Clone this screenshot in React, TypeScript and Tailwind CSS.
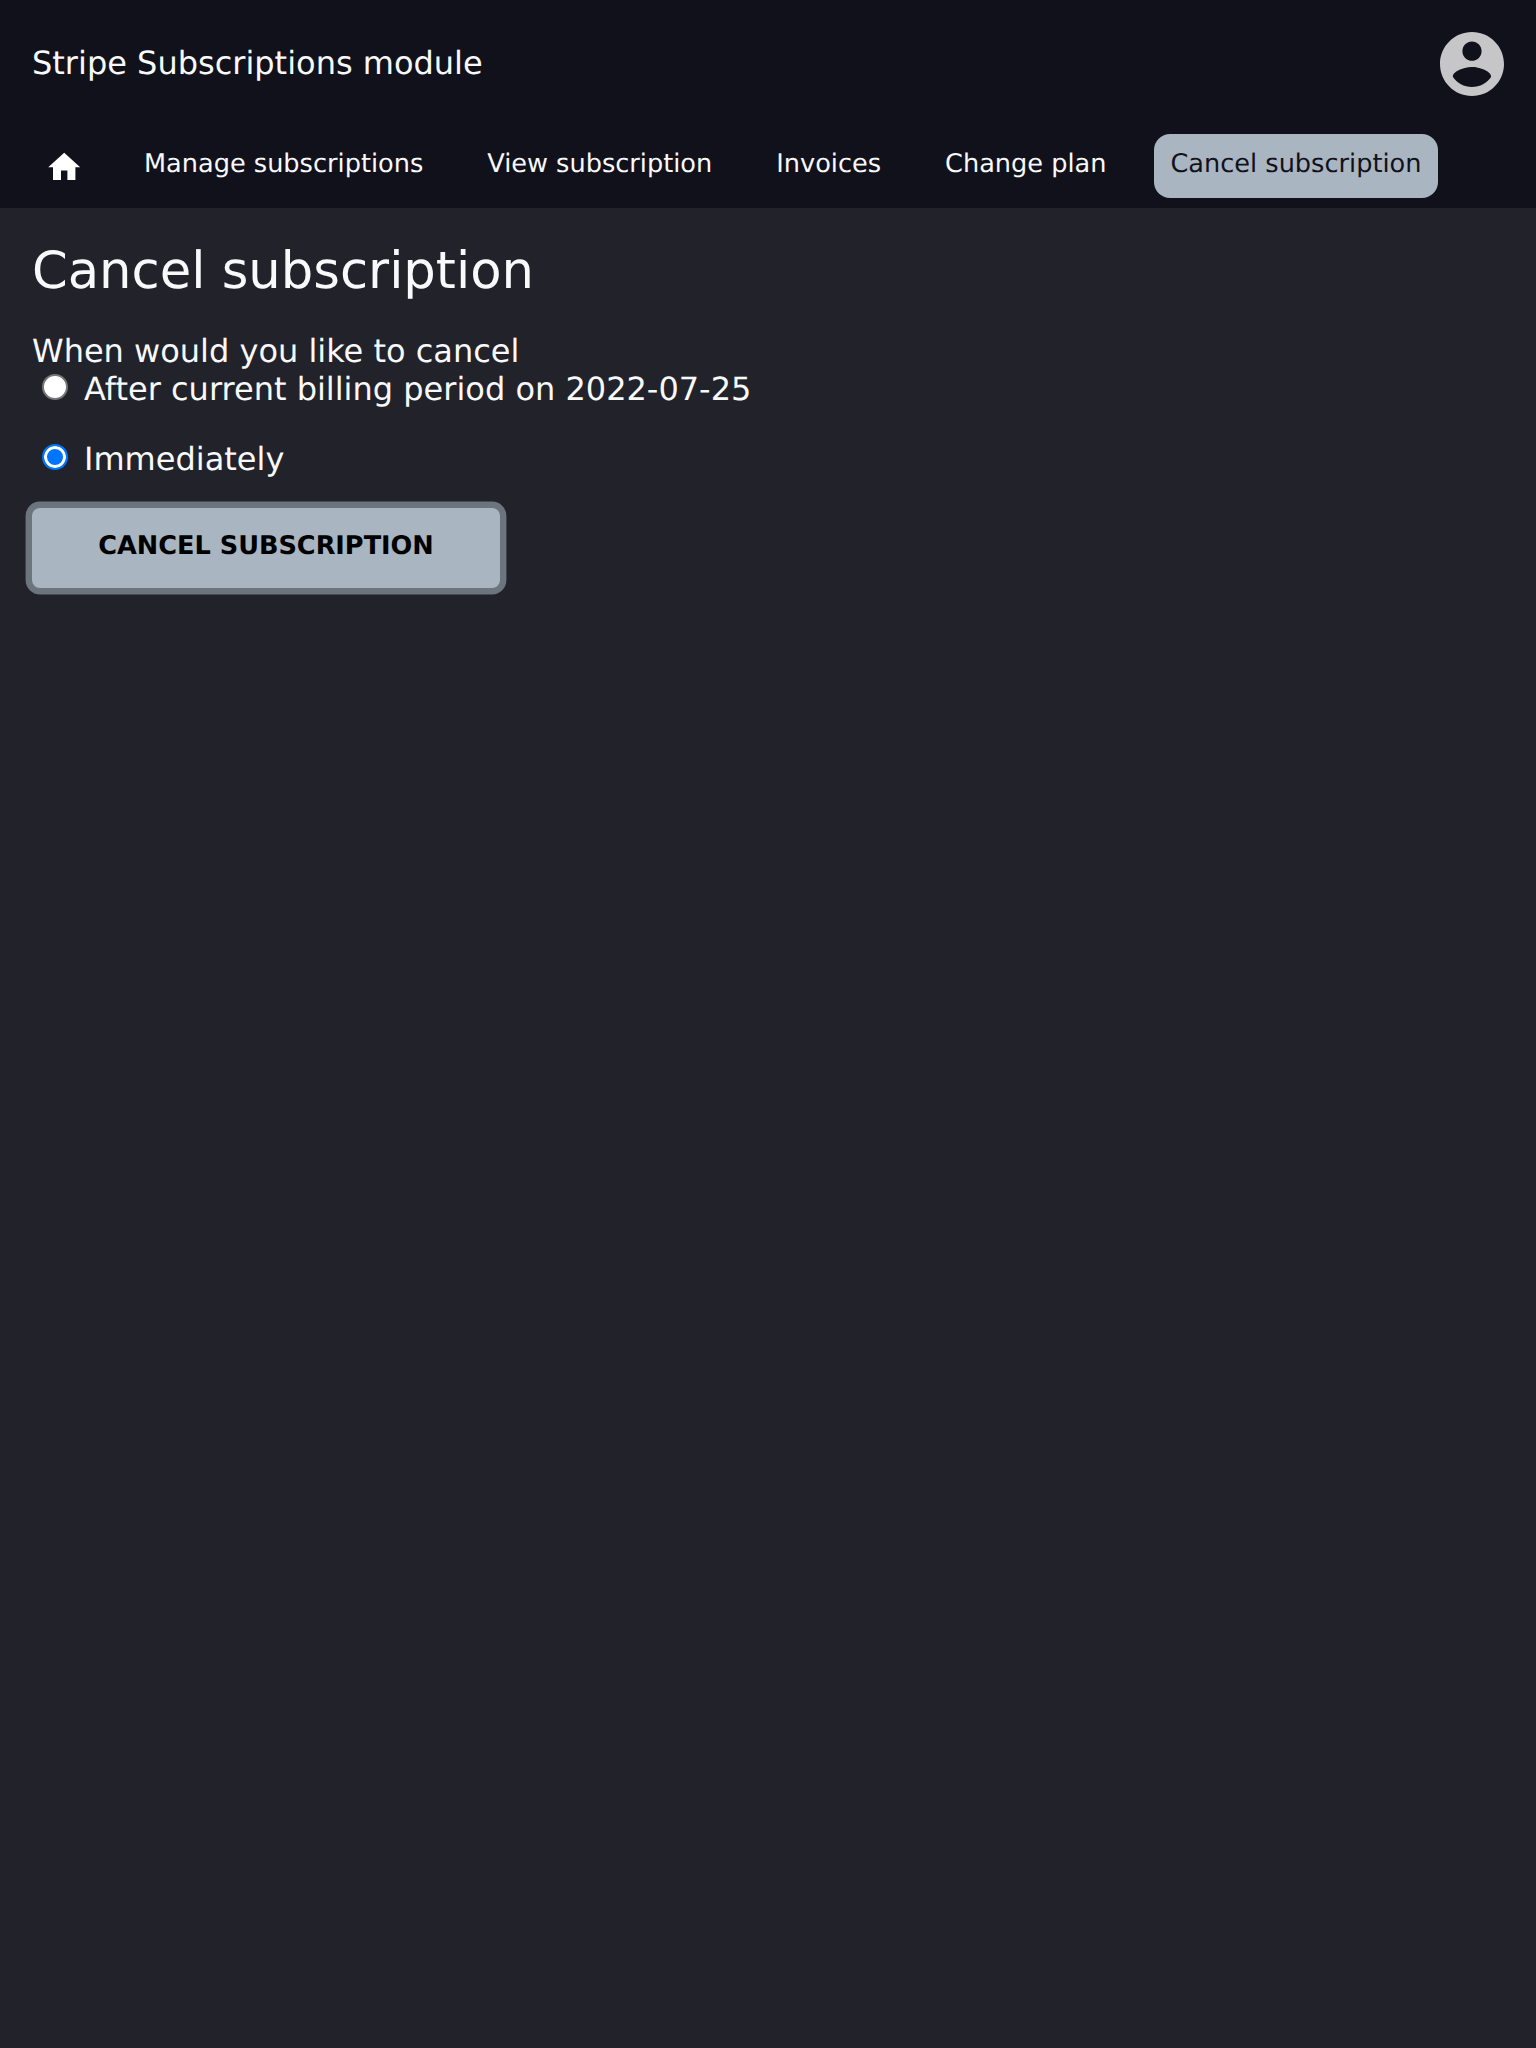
const nav = ['Manage subscriptions', 'View subscription', 'Invoices', 'Change plan', 'Cancel subscription'];

export default function App() {
  return (
    <div className="min-h-[2048px] w-full bg-[#22222b] font-['DejaVu_Sans',sans-serif] text-[#f8f9fa] [text-rendering:geometricPrecision]">
      <header className="h-[208px] bg-[#11111b]">
        <div className="flex h-32 items-center justify-between px-8">
          <div className="pb-0.5 text-[32px] leading-[38px]">Stripe Subscriptions module</div>
          <svg className="size-16" viewBox="2 2 20 20" fill="#c6c6c8">
            <path d="M12 2C6.48 2 2 6.48 2 12s4.48 10 10 10 10-4.48 10-10S17.52 2 12 2zm0 3c1.66 0 3 1.34 3 3s-1.34 3-3 3-3-1.34-3-3 1.34-3 3-3zm0 14.2c-2.5 0-4.71-1.28-6-3.22.03-1.99 4-3.08 6-3.08 1.99 0 5.97 1.09 6 3.08-1.29 1.94-3.5 3.22-6 3.22z" />
          </svg>
        </div>
        <nav className="flex items-start gap-8 px-8 pt-1.5 text-[25.6px]">
          <a className="flex h-16 w-16 items-center justify-center pt-[1.6px]">
            <svg className="size-[38.4px]" viewBox="0 0 24 24" fill="white"><path d="M10 20v-6h4v6h5v-8h3L12 3 2 12h3v8z" /></svg>
          </a>
          {nav.map((n, i) => (
            <a key={n} className={i === 4 ? 'h-16 w-[284px] rounded-2xl bg-[#a9b5c1] px-4 leading-[60px] text-[#11111b]' : 'h-16 px-4 leading-[60px]'}>{n}</a>
          ))}
        </nav>
      </header>
      <main className="px-8 pt-[33px]">
        <h1 className="text-[51.2px] leading-[60px]">Cancel subscription</h1>
        <form className="mt-[31px] text-[32px] leading-[38px]">
          <p>When would you like to cancel</p>
          <label className="flex items-start gap-4 pl-[10px]">
            <input type="radio" name="when" className="mt-1 size-[26px] shrink-0 appearance-none rounded-full border-2 border-[#767676] bg-white" />
            After current billing period on 2022-07-25
          </label>
          <label className="mt-8 flex items-start gap-4 pl-[10px]">
            <input type="radio" name="when" defaultChecked className="mt-1 size-[26px] shrink-0 appearance-none rounded-full border-2 border-[#0075ff] bg-[#0075ff] shadow-[inset_0_0_0_3px_white]" />
            Immediately
          </label>
          <button type="button" className="mt-[30px] block h-20 w-[468px] rounded-lg bg-[#a9b5c1] pb-1 text-[25.6px] leading-[32px] font-bold text-black uppercase shadow-[0_0_0_6.4px_#6c757d] [text-rendering:geometricPrecision]">
            Cancel subscription
          </button>
        </form>
      </main>
    </div>
  );
}
